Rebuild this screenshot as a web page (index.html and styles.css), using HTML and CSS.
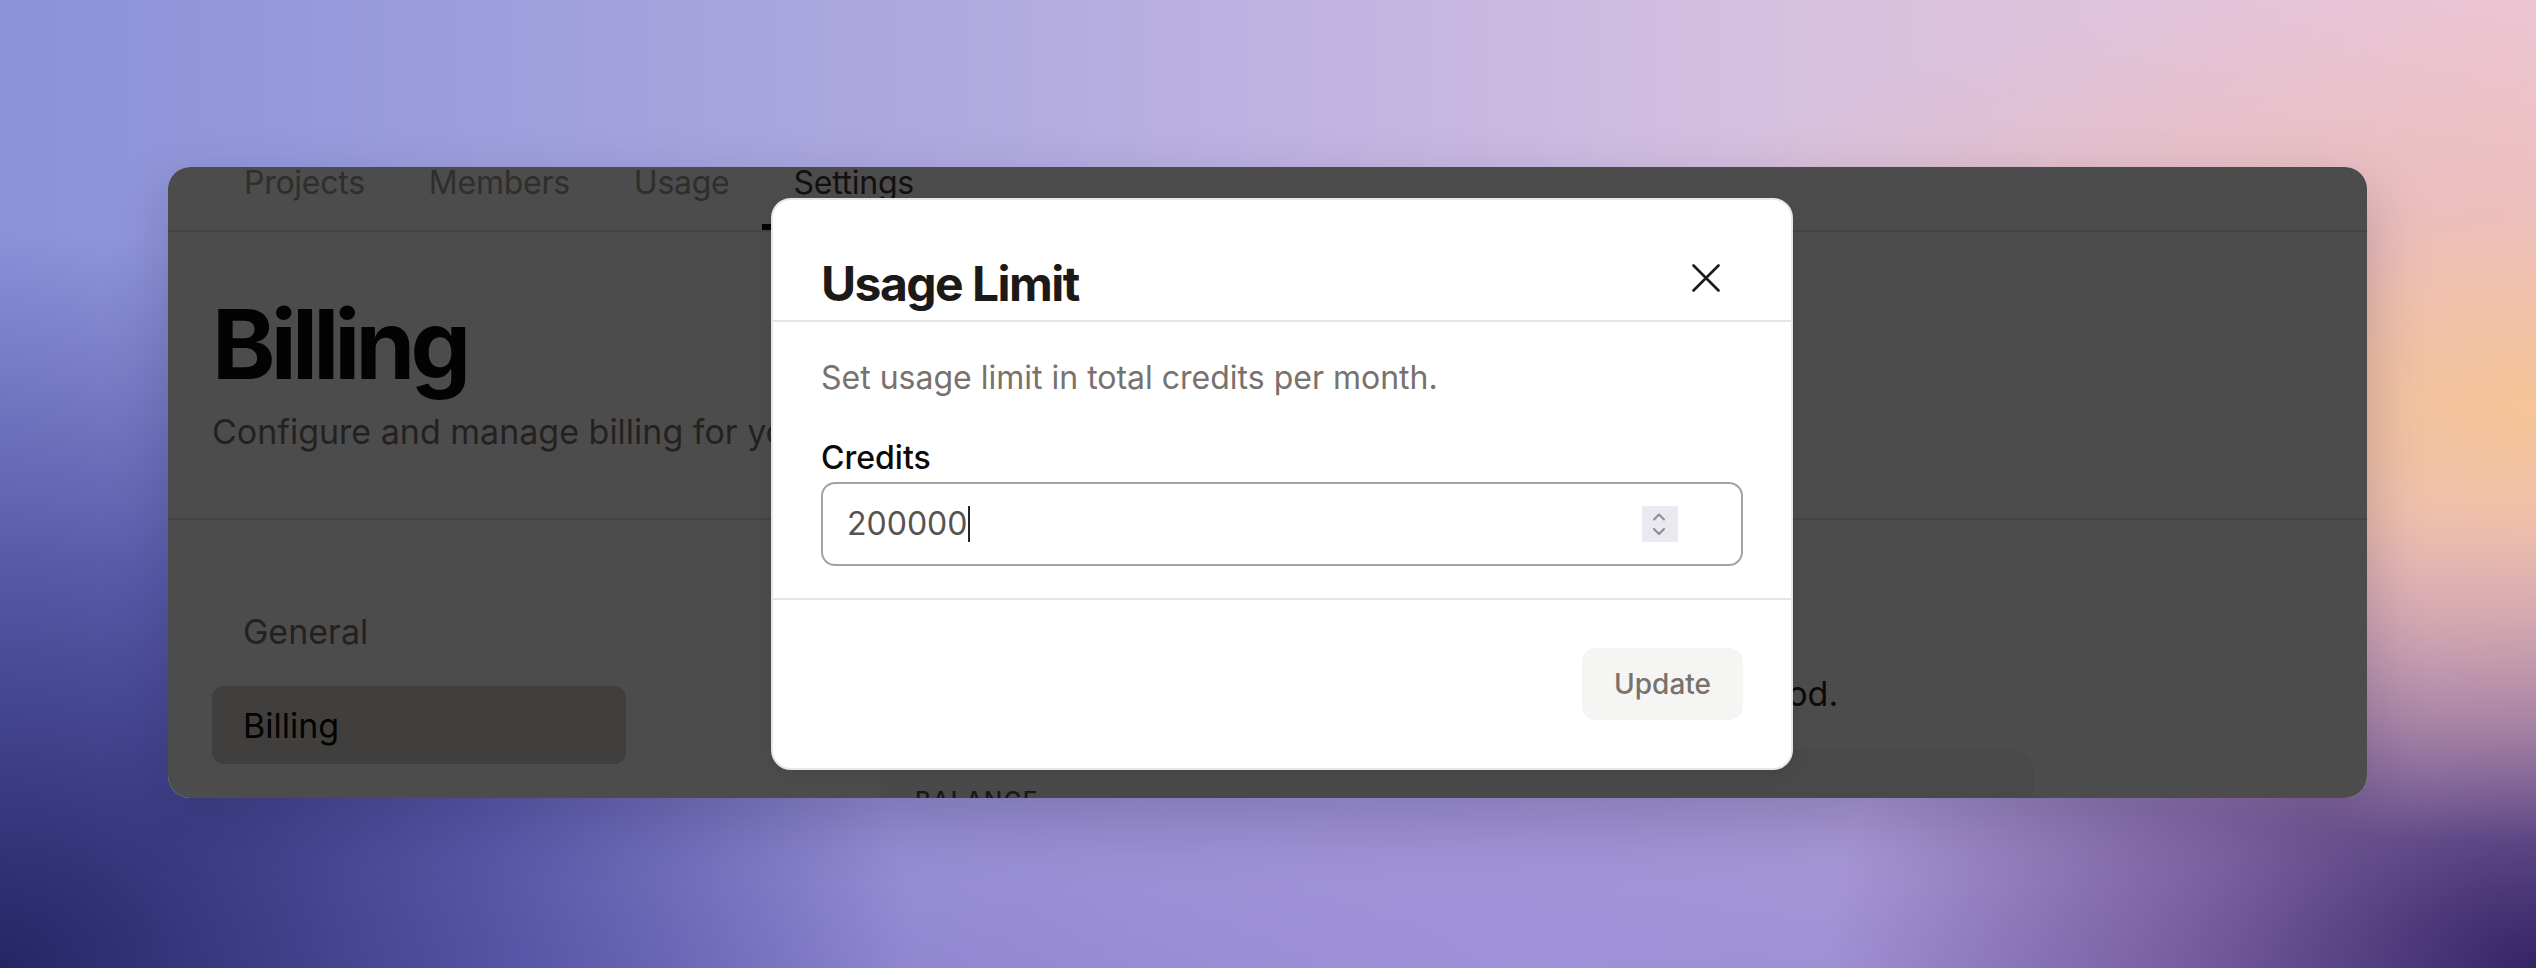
FILE: index.html
```html
<!DOCTYPE html>
<html lang="en">
<head>
<meta charset="utf-8">
<title>Billing – Usage Limit</title>
<link rel="stylesheet" href="styles.css">
</head>
<body>
  <div class="app-window">
    <nav class="tabs">
      <a class="tab">Projects</a>
      <a class="tab">Members</a>
      <a class="tab">Usage</a>
      <a class="tab active">Settings</a>
    </nav>
    <header class="page-header">
      <h1 class="page-title">Billing</h1>
      <p class="page-subtitle">Configure and manage billing for your organization.</p>
    </header>
    <div class="page-body">
      <aside class="side-nav">
        <a class="side-item">General</a>
        <a class="side-item active">Billing</a>
      </aside>
      <main class="content">
        <h2 class="section-title">Usage</h2>
        <p class="section-desc">Credits used and remaining during the current billing period.</p>
        <div class="card">
          <div class="card-label">Balance</div>
        </div>
      </main>
    </div>
    <div class="overlay"></div>
  </div>

  <div class="modal" role="dialog" aria-labelledby="modal-title">
    <div class="modal-header">
      <h2 class="modal-title" id="modal-title">Usage Limit</h2>
      <button class="modal-close" aria-label="Close">
        <svg width="28" height="28" viewBox="0 0 28 28" fill="none" stroke="#1c1917" stroke-width="2.6" stroke-linecap="round">
          <path d="M1.5 1.5 L26.5 26.5 M26.5 1.5 L1.5 26.5"/>
        </svg>
      </button>
    </div>
    <div class="modal-body">
      <p class="modal-desc">Set usage limit in total credits per month.</p>
      <label class="field-label">Credits</label>
      <div class="number-field">
        <span class="number-value">200000</span><span class="caret"></span>
        <span class="spinner">
          <svg width="36" height="36" viewBox="0 0 36 36" fill="none" stroke="#8b8a99" stroke-width="2" stroke-linecap="round" stroke-linejoin="round">
            <path d="M12 13.5 L17 8.5 L22 13.5"/>
            <path d="M12 23 L17 28 L22 23"/>
          </svg>
        </span>
      </div>
    </div>
    <div class="modal-footer">
      <button class="btn-update">Update</button>
    </div>
  </div>
</body>
</html>
```

FILE: styles.css
```css
* {
  box-sizing: border-box;
  margin: 0;
  padding: 0;
}

html,
body {
  width: 2536px;
  height: 968px;
}

body {
  position: relative;
  overflow: hidden;
  padding: 167px 0 0 168px;
  font-family: "Inter", "Liberation Sans", sans-serif;
  background-color: #9a90d6;
  background-image:
    radial-gradient(40% 45% at 100% 42%, rgba(246, 196, 150, 1) 0%, rgba(238, 186, 170, 0.6) 45%, rgba(238, 186, 170, 0) 100%),
    radial-gradient(45% 95% at 0% 100%, rgba(36, 38, 100, 1) 0%, rgba(62, 62, 146, 0.65) 45%, rgba(62, 62, 146, 0) 80%),
    radial-gradient(28% 50% at 100% 100%, rgba(52, 36, 102, 1) 0%, rgba(90, 60, 130, 0.6) 50%, rgba(90, 60, 130, 0) 100%),
    radial-gradient(35% 40% at 60% 100%, rgba(160, 146, 218, 0.9) 0%, rgba(160, 146, 218, 0) 100%),
    linear-gradient(180deg, rgba(0, 0, 0, 0) 55%, rgba(110, 100, 190, 0.55) 100%),
    linear-gradient(90deg, #8a92d8 0%, #b2abe0 40%, #d6c0e0 70%, #ecc6d6 100%);
}

/* ---------- App window (behind the dialog) ---------- */
.app-window {
  position: relative;
  width: 2199px;
  height: 631px;
  background: #ffffff;
  border-radius: 22px;
  overflow: hidden;
  box-shadow: 0 24px 60px rgba(20, 12, 60, 0.22);
}

.tabs {
  display: flex;
  margin-top: -8px;
  padding: 0 44px;
  border-bottom: 2px solid #e7e5e4;
}

.tab {
  padding: 0 32px 17px;
  border-bottom: 6px solid transparent;
  font-size: 32px;
  line-height: 48px;
  letter-spacing: -0.008em;
  color: #9e9995;
}

.tab.active {
  color: #3f3b37;
  border-bottom-color: #0c0a09;
}

.page-header {
  padding: 64px 44px 62px;
  border-bottom: 2px solid #e7e5e4;
}

.page-title {
  font-size: 96px;
  line-height: 96px;
  font-weight: 700;
  letter-spacing: -0.05em;
  color: #0c0a09;
}

.page-subtitle {
  margin-top: 16px;
  font-size: 34px;
  line-height: 48px;
  color: #78716c;
}

.page-body {
  display: grid;
  grid-template-columns: 414px 1153px;
  column-gap: 255px;
  padding: 72px 44px 0;
}

.side-nav {
  display: flex;
  flex-direction: column;
  gap: 16px;
}

.side-item {
  display: flex;
  align-items: center;
  height: 78px;
  padding: 0 31px;
  border-radius: 12px;
  font-size: 34px;
  color: #78716c;
}

.side-item.active {
  background: #d6d3d1;
  color: #0c0a09;
}

.section-title {
  font-size: 40px;
  line-height: 56px;
  font-weight: 700;
  color: #0c0a09;
  margin-bottom: 22px;
}

.section-desc {
  font-size: 34px;
  line-height: 48px;
  word-spacing: -1.2px;
  color: #292524;
  margin-bottom: 31px;
  white-space: nowrap;
}

.card {
  background: #f5f5f4;
  border-radius: 24px;
  padding: 36px 34px;
  height: 200px;
}

.card-label {
  font-size: 24px;
  line-height: 32px;
  font-weight: 500;
  letter-spacing: 0.06em;
  text-transform: uppercase;
  color: #57534e;
}

.overlay {
  position: absolute;
  inset: 0;
  background: rgba(0, 0, 0, 0.7);
}

/* ---------- Dialog ---------- */
.modal {
  position: absolute;
  left: 771px;
  top: 198px;
  width: 1022px;
  background: #ffffff;
  border: 2px solid #e7e7e7;
  border-radius: 20px;
  box-shadow: 0 4px 14px rgba(0, 0, 0, 0.08);
}

.modal-header {
  display: flex;
  justify-content: space-between;
  align-items: flex-start;
  padding: 60px 48px 12px;
  border-bottom: 2px solid #e5e5e5;
}

.modal-title {
  font-size: 48px;
  line-height: 48px;
  font-weight: 700;
  letter-spacing: -0.032em;
  color: #1c1917;
}

.modal-close {
  display: flex;
  width: 28px;
  height: 28px;
  margin-top: 4px;
  margin-right: 23px;
  background: none;
  border: 0;
}

.modal-body {
  padding: 32px 48px;
  border-bottom: 2px solid #e5e5e5;
}

.modal-desc {
  font-size: 32px;
  line-height: 48px;
  color: #78716c;
  margin-bottom: 32px;
}

.field-label {
  display: block;
  font-size: 32px;
  line-height: 48px;
  font-weight: 500;
  color: #0c0a09;
}

.number-field {
  display: flex;
  align-items: center;
  height: 84px;
  padding: 0 63px 0 24px;
  border: 2px solid #a8a29e;
  border-radius: 14px;
}

.number-value {
  font-size: 32px;
  line-height: 48px;
  color: #57534e;
}

.caret {
  width: 2px;
  height: 36px;
  margin-left: 1px;
  background: #292524;
}

.spinner {
  display: flex;
  margin-left: auto;
  width: 36px;
  height: 36px;
  background: #e9e9ef;
}

.modal-footer {
  display: flex;
  justify-content: flex-end;
  padding: 48px;
}

.btn-update {
  height: 72px;
  padding: 0 32px;
  border: 0;
  border-radius: 14px;
  background: #f5f5f4;
  font-family: inherit;
  font-size: 28px;
  font-weight: 500;
  color: #78716c;
}
```
